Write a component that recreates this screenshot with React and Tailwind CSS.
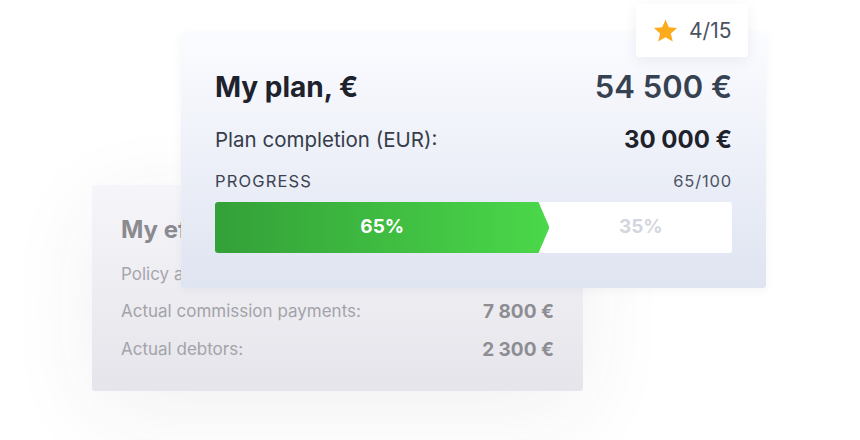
function Star() {
    return (
        <svg width="27" height="26" viewBox="0 0 24 24" className="shrink-0">
            <path
                d="M12 1.5l3.1 7.05 7.6.65-5.75 5 1.75 7.45L12 17.7l-6.7 3.95 1.75-7.45L1.3 9.2l7.6-.65z"
                fill="#fbab1c"
            />
        </svg>
    );
}

function BackCard() {
    const rows = [
        { label: 'Actual commission payments:', value: '7 800 €' },
        { label: 'Actual debtors:', value: '2 300 €' },
    ];
    return (
        <div className="col-start-1 row-start-1 self-start justify-self-start ml-[92px] mt-[185px] w-[491px] h-[206px] rounded-[3px] bg-gradient-to-b from-[#f6f5f9] to-[#e6e5eb] shadow-[0_20px_90px_rgba(60,60,80,0.07)] px-[29px] pt-[30px]">
            <div className="h-[30px] flex items-center text-[24px] font-bold text-[#8a8a90]">My efficiency</div>
            <div className="mt-[18px] h-[24px] flex items-center text-[17px] text-[#a6a6ad]">Policy amount:</div>
            {rows.map((row, i) => (
                <div key={i} className={`${i === 0 ? 'mt-[13px]' : 'mt-[14px]'} h-[24px] flex items-center justify-between`}>
                    <span className="text-[17px] text-[#a3a3aa]">{row.label}</span>
                    <span className="text-[19px] font-bold text-[#8d8d93]">{row.value}</span>
                </div>
            ))}
        </div>
    );
}

function ProgressBar({ percent }) {
    return (
        <div className="mt-[11px] h-[51px] rounded-[3px] bg-white flex overflow-hidden">
            <div
                className="h-full shrink-0 flex items-center justify-center bg-gradient-to-r from-[#33a038] to-[#4bd84a] [clip-path:polygon(0_0,calc(100%-11px)_0,100%_50%,calc(100%-11px)_100%,0_100%)]"
                style={{ width: `${percent - 0.3}%` }}
            >
                <span className="text-[19px] font-bold text-white">{percent}%</span>
            </div>
            <div className="flex-1 flex items-center justify-center">
                <span className="text-[19px] font-bold text-[#d3d6de]">{100 - percent}%</span>
            </div>
        </div>
    );
}

function FrontCard() {
    return (
        <div className="col-start-1 row-start-1 self-start justify-self-start ml-[181px] mt-[33px] w-[585px] h-[255px] rounded-[3px] bg-gradient-to-b from-[#fbfcff] to-[#dfe4f1] shadow-[0_2px_10px_rgba(60,70,110,0.06)] px-[34px] pt-[38px] flex flex-col">
            <div className="h-[32px] flex items-center justify-between">
                <span className="text-[28px] font-bold text-[#1d222c]">My plan, €</span>
                <span className="text-[31px] font-semibold text-[#364152]">54 500 €</span>
            </div>
            <div className="mt-[21px] h-[32px] flex items-center justify-between">
                <span className="text-[20.5px] text-[#363d4a]">Plan completion (EUR):</span>
                <span className="text-[24px] font-bold text-[#1d222c]">30 000 €</span>
            </div>
            <div className="mt-[15px] h-[20px] flex items-center justify-between text-[16.5px] text-[#3b4250]">
                <span className="tracking-[0.07em]">PROGRESS</span>
                <span className="tracking-[0.05em] text-[#4b5363]">65/100</span>
            </div>
            <ProgressBar percent={65} />
        </div>
    );
}

export default function App() {
    return (
        <div className="w-[860px] h-[440px] bg-white overflow-hidden grid font-['Inter',sans-serif]">
            <BackCard />
            <FrontCard />
            <div className="col-start-1 row-start-1 self-start justify-self-start ml-[636px] mt-[4px] w-[112px] h-[53px] rounded-[3px] bg-white shadow-[0_4px_14px_rgba(60,70,110,0.08)] flex items-center gap-[10px] pl-[16px]">
                <Star />
                <span className="text-[21px] text-[#4a5262]">4/15</span>
            </div>
        </div>
    );
}
